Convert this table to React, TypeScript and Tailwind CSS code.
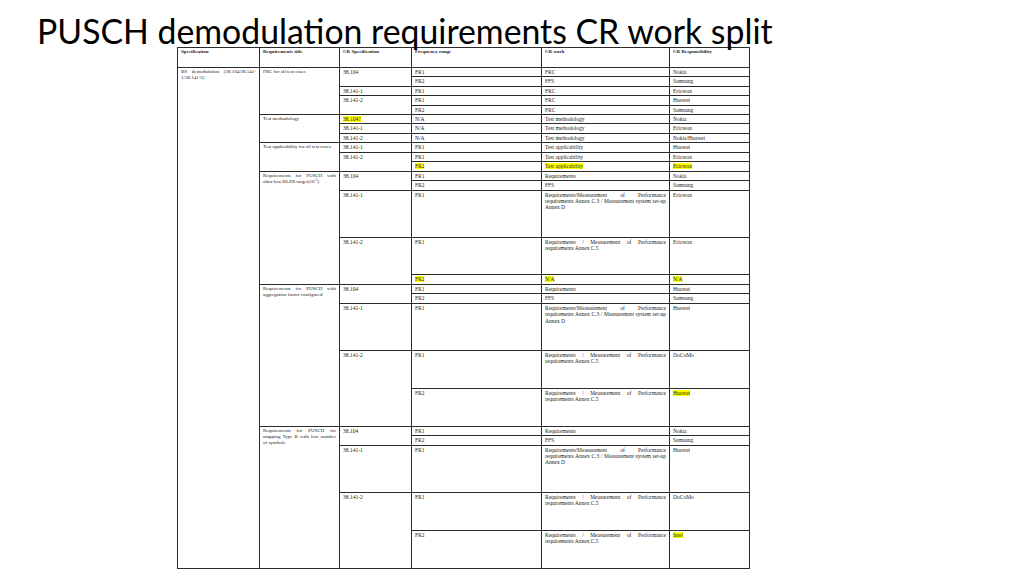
import React from 'react';

const base = 'border border-[#2b2b2b] align-top px-[3px] pt-[1px] leading-[6.3px] text-[#222] font-normal';
const cell = `${base} text-[5.5px]`;
const small = `${base} text-[5px]`;
const just = 'text-justify';

const Hl: React.FC<{ children: React.ReactNode }> = ({ children }) => (
  <span className="bg-[#ffff00]">{children}</span>
);

// one FR row: frequency range, CR work, responsibility
const Tail: React.FC<{ fr: React.ReactNode; work: React.ReactNode; who: React.ReactNode; justify?: boolean }> = ({ fr, work, who, justify }) => (
  <>
    <td className={cell}>{fr}</td>
    <td className={`${cell} ${justify ? just : ''}`}>{work}</td>
    <td className={cell}>{who}</td>
  </>
);

const ANNEX_D = 'Requirements/Measurement of Performance requirements Annex C.3 / Measurement system set-up Annex D';
const ANNEX_C5 = 'Requirements / Measurement of Performance requirements Annex C.5';

const App: React.FC = () => {
  return (
    <div className="w-[1024px] h-[576px] bg-white overflow-hidden flex flex-col">
      {/* Slide title, its descenders run over the table header */}
      <div className="relative z-10 h-[47px] pl-[37px] pt-[15px] text-[33.8px] leading-none text-black whitespace-nowrap font-['Lato',sans-serif]">
        PUSCH demodulation requirements CR work split
      </div>

      <div className="pl-[177px] font-['Liberation_Serif',serif]">
        <table className="border-collapse table-fixed w-[572px]">
          <colgroup>
            <col className="w-[82px]" />
            <col className="w-[80px]" />
            <col className="w-[72px]" />
            <col className="w-[130px]" />
            <col className="w-[128px]" />
            <col className="w-[80px]" />
          </colgroup>
          <tbody>
            <tr className="h-[19.7px]">
              <th className={`${small} text-left !font-bold`}>Specification</th>
              <th className={`${small} text-left !font-bold`}>Requirements title</th>
              <th className={`${small} text-left !font-bold`}>CR Specification</th>
              <th className={`${small} text-left !font-bold`}>Frequency range</th>
              <th className={`${small} text-left !font-bold`}>CR work</th>
              <th className={`${small} text-left !font-bold`}>CR Responsibility</th>
            </tr>

            {/* FRC */}
            <tr className="h-[9.46px]">
              <td rowSpan={26} className={`${small} ${just}`}>BS demodulation (38.104/38.141-1/38.141-2)</td>
              <td rowSpan={5} className={small}>FRC for all test cases</td>
              <td rowSpan={2} className={cell}>38.104</td>
              <Tail fr="FR1" work="FRC" who="Nokia" />
            </tr>
            <tr className="h-[9.46px]">
              <Tail fr="FR2" work="FFS" who="Samsung" />
            </tr>
            <tr className="h-[9.46px]">
              <td className={cell}>38.141-1</td>
              <Tail fr="FR1" work="FRC" who="Ericsson" />
            </tr>
            <tr className="h-[9.46px]">
              <td rowSpan={2} className={cell}>38.141-2</td>
              <Tail fr="FR1" work="FRC" who="Huawei" />
            </tr>
            <tr className="h-[9.46px]">
              <Tail fr="FR2" work="FRC" who="Samsung" />
            </tr>

            {/* Test methodology */}
            <tr className="h-[9.46px]">
              <td rowSpan={3} className={small}>Test methodology</td>
              <td className={cell}><Hl>38.104?</Hl></td>
              <Tail fr="N/A" work="Test methodology" who="Nokia" />
            </tr>
            <tr className="h-[9.46px]">
              <td className={cell}>38.141-1</td>
              <Tail fr="N/A" work="Test methodology" who="Ericsson" />
            </tr>
            <tr className="h-[9.46px]">
              <td className={cell}>38.141-2</td>
              <Tail fr="N/A" work="Test methodology" who="Nokia/Huawei" />
            </tr>

            {/* Test applicability */}
            <tr className="h-[9.46px]">
              <td rowSpan={3} className={small}>Test applicability for all test cases</td>
              <td className={cell}>38.141-1</td>
              <Tail fr="FR1" work="Test applicability" who="Huawei" />
            </tr>
            <tr className="h-[9.46px]">
              <td rowSpan={2} className={cell}>38.141-2</td>
              <Tail fr="FR1" work="Test applicability" who="Ericsson" />
            </tr>
            <tr className="h-[9.46px]">
              <Tail fr={<Hl>FR2</Hl>} work={<Hl>Test applicability</Hl>} who={<Hl>Ericsson</Hl>} />
            </tr>

            {/* Ultra-low BLER */}
            <tr className="h-[9.46px]">
              <td rowSpan={5} className={`${small} ${just}`}>
                Requirements for PUSCH with ultra-low BLER target(10<span className="relative -top-[2px] text-[3.5px] leading-none">-5</span>)
              </td>
              <td rowSpan={2} className={cell}>38.104</td>
              <Tail fr="FR1" work="Requirements" who="Nokia" />
            </tr>
            <tr className="h-[9.46px]">
              <Tail fr="FR2" work="FFS" who="Samsung" />
            </tr>
            <tr className="h-[47px]">
              <td className={cell}>38.141-1</td>
              <Tail fr="FR1" work={ANNEX_D} who="Ericsson" justify />
            </tr>
            <tr className="h-[37.6px]">
              <td rowSpan={2} className={cell}>38.141-2</td>
              <Tail fr="FR1" work={ANNEX_C5} who="Ericsson" justify />
            </tr>
            <tr className="h-[9.7px]">
              <Tail fr={<Hl>FR2</Hl>} work={<Hl>N/A</Hl>} who={<Hl>N/A</Hl>} />
            </tr>

            {/* Aggregation factor */}
            <tr className="h-[9.6px]">
              <td rowSpan={5} className={`${small} ${just}`}>Requirements for PUSCH with aggregation factor configured</td>
              <td rowSpan={2} className={cell}>38.104</td>
              <Tail fr="FR1" work="Requirements" who="Huawei" />
            </tr>
            <tr className="h-[9.6px]">
              <Tail fr="FR2" work="FFS" who="Samsung" />
            </tr>
            <tr className="h-[47px]">
              <td className={cell}>38.141-1</td>
              <Tail fr="FR1" work={ANNEX_D} who="Huawei" justify />
            </tr>
            <tr className="h-[37.7px]">
              <td rowSpan={2} className={cell}>38.141-2</td>
              <Tail fr="FR1" work={ANNEX_C5} who="DoCoMo" justify />
            </tr>
            <tr className="h-[38px]">
              <Tail fr="FR2" work={ANNEX_C5} who={<Hl>Huawei</Hl>} justify />
            </tr>

            {/* Mapping type B */}
            <tr className="h-[9.4px]">
              <td rowSpan={5} className={`${small} ${just}`}>Requirements for PUSCH for mapping Type B with low number of symbols</td>
              <td rowSpan={2} className={cell}>38.104</td>
              <Tail fr="FR1" work="Requirements" who="Nokia" />
            </tr>
            <tr className="h-[9.4px]">
              <Tail fr="FR2" work="FFS" who="Samsung" />
            </tr>
            <tr className="h-[47.3px]">
              <td className={cell}>38.141-1</td>
              <Tail fr="FR1" work={ANNEX_D} who="Huawei" justify />
            </tr>
            <tr className="h-[38px]">
              <td rowSpan={2} className={cell}>38.141-2</td>
              <Tail fr="FR1" work={ANNEX_C5} who="DoCoMo" justify />
            </tr>
            <tr className="h-[37.7px]">
              <Tail fr="FR2" work={ANNEX_C5} who={<Hl>Intel</Hl>} justify />
            </tr>
          </tbody>
        </table>
      </div>
    </div>
  );
};

export default App;
